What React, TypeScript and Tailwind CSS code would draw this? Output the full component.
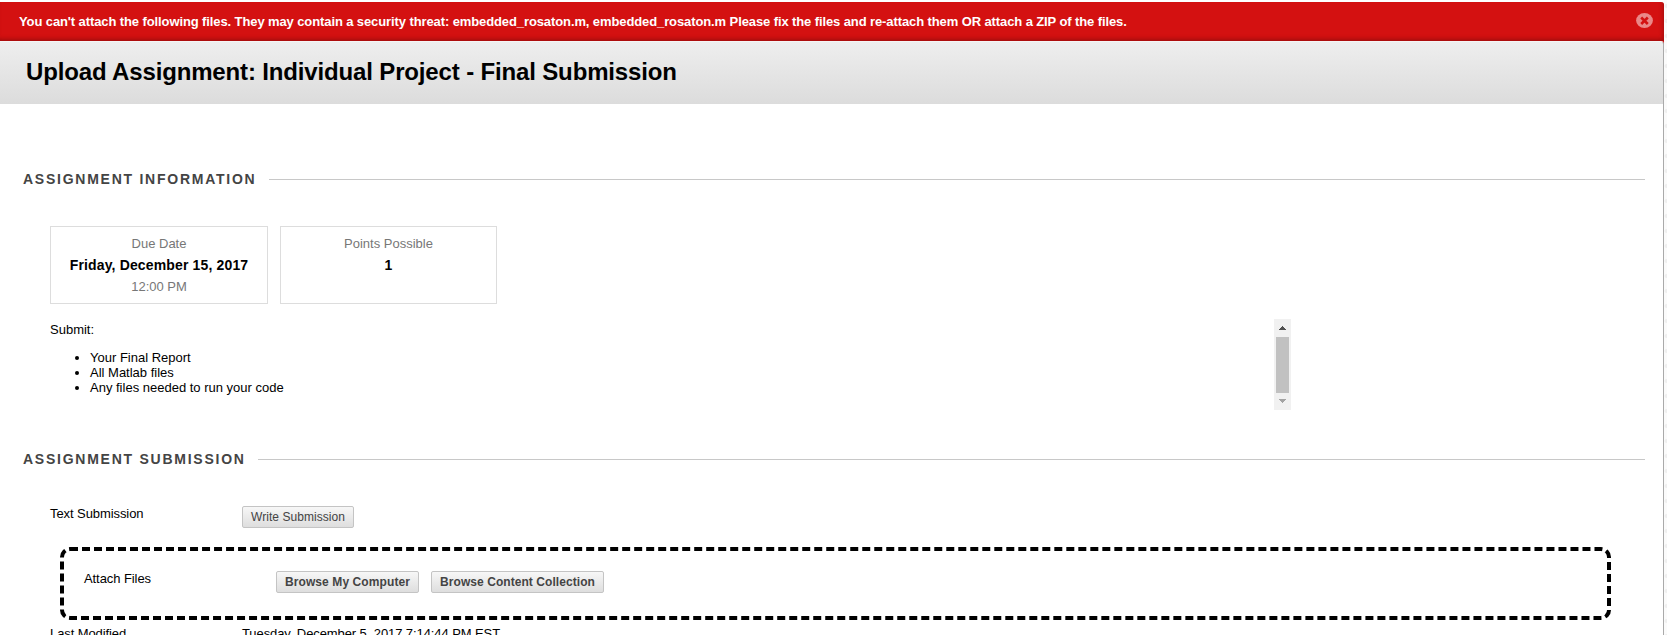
import type { ReactNode } from "react";

function SectionHeading({ children }: { children: ReactNode }) {
  return (
    <div className="flex h-4 items-start pr-[18px] pl-[23px]">
      <h2 className="text-[14px] leading-4 font-bold tracking-[1.75px] whitespace-nowrap text-[#444]">{children}</h2>
      <div className="mt-2 ml-[12.5px] h-px flex-1 bg-[#c8c8c8]" />
    </div>
  );
}

function Button({ children, className }: { children: ReactNode; className: string }) {
  return (
    <button
      className={`h-[22px] shrink-0 rounded-[2px] border border-[#c4c4c4] bg-linear-to-b from-[#f7f7f7] to-[#dedede] text-center text-[12px] leading-[20px] whitespace-nowrap text-[#444] ${className}`}
    >
      {children}
    </button>
  );
}

function InfoCard({ label, value, note, className }: { label: string; value: string; note?: string; className: string }) {
  return (
    <div className={`h-[78px] border border-[#ddd] pt-[6px] text-center ${className}`}>
      <div className="h-[22px] leading-[21px] text-[#777]">{label}</div>
      <div className="h-[21px] text-[14px] leading-[20px] font-bold tracking-[0.15px]">{value}</div>
      {note && <div className="leading-[21px] text-[#777]">{note}</div>}
    </div>
  );
}

export default function App() {
  return (
    <div className="flex h-[635px] w-[1667px] overflow-hidden bg-[#fbfbfb] font-['Liberation_Sans',Arial,sans-serif] text-[13px] text-black">
      <main className="w-[1664px] bg-white pt-[2px]">
        <div className="rounded-tr-[3px] bg-[#d41111]">
          <div className="flex h-[39px] items-start justify-between rounded-tr-[3px] pr-[11px] pl-[19px] shadow-[inset_-2px_-3px_4px_-1px_#a00d0d]">
            <p className="mt-[12px] text-[13px] leading-[15px] font-bold tracking-[-0.104px] whitespace-nowrap text-white">
              You can't attach the following files. They may contain a security threat: embedded_rosaton.m,
              embedded_rosaton.m Please fix the files and re-attach them OR attach a ZIP of the files.
            </p>
            <svg className="mt-[11px] h-[15px] w-[17px]" viewBox="0 0 17 15">
              <ellipse cx="8.5" cy="7.5" rx="8.4" ry="7.5" fill="#ea8888" />
              <path d="M5.2 4.5L11.8 11M11.8 4.5L5.2 11" stroke="#d41111" strokeWidth="2.6" />
            </svg>
          </div>
          <header className="h-[63px] rounded-tr-[3px] border-t border-r border-t-[#f5f5f5] border-r-[#aaa] bg-linear-to-b from-[#eeeeee] to-[#dcdcdc] pl-[26px]">
            <h1 className="pt-[16px] text-[24px] leading-[28px] font-bold tracking-[-0.15px] whitespace-nowrap">
              Upload Assignment: Individual Project - Final Submission
            </h1>
          </header>
        </div>

        <div className="h-[531px] border-r border-[#aaa] pt-[67px]">
          <SectionHeading>ASSIGNMENT INFORMATION</SectionHeading>

          <div className="mt-[39px] flex gap-3 pl-[50px]">
            <InfoCard className="w-[218px]" label="Due Date" value="Friday, December 15, 2017" note="12:00 PM" />
            <InfoCard className="w-[217px]" label="Points Possible" value="1" />
          </div>

          <div className="mt-[15px] flex h-[91px] w-[1291px] justify-between pl-[50px]">
            <div className="pt-[3px] leading-[15px]">
              <p>Submit:</p>
              <ul className="mt-[13px] list-disc pl-10">
                <li>Your Final Report</li>
                <li>All Matlab files</li>
                <li>Any files needed to run your code</li>
              </ul>
            </div>
            <div className="flex w-[17px] flex-col items-center bg-[#f1f1f1]">
              <svg className="h-[18px] w-[17px]" viewBox="0 0 17 18" shapeRendering="crispEdges">
                <path d="M8 7h1v1h1v1h1v1h1v1H5v-1h1V9h1V8h1z" fill="#505050" />
              </svg>
              <div className="h-[56px] w-[13px] bg-[#c1c1c1]" />
              <svg className="h-[17px] w-[17px]" viewBox="0 0 17 17" shapeRendering="crispEdges">
                <path d="M5 6h7v1h-1v1h-1v1H9v1H8V9H7V8H6V7H5z" fill="#a3a3a3" />
              </svg>
            </div>
          </div>

          <div className="mt-[41px]">
            <SectionHeading>ASSIGNMENT SUBMISSION</SectionHeading>
          </div>

          <div className="mt-[39px] flex h-[41px] pl-[50px]">
            <span className="w-[192px] leading-[15px] tracking-[-0.08px]">Text Submission</span>
            <Button className="w-[112px] tracking-[0.04px]">Write Submission</Button>
          </div>

          <div className="ml-[60px] flex h-[73px] w-[1551px] rounded-[10px] border-4 border-dashed border-black pt-[20px] pl-[20px]">
            <span className="w-[192px] leading-[15px] tracking-[-0.08px]">Attach Files</span>
            <Button className="w-[143px] font-bold tracking-[0.1px]">Browse My Computer</Button>
            <Button className="ml-3 w-[173px] font-bold tracking-[0.06px]">Browse Content Collection</Button>
          </div>

          <div className="mt-[6px] flex h-[15px] pl-[50px] leading-[15px] tracking-[-0.09px]">
            <span className="w-[192px]">Last Modified</span>
            <span>Tuesday, December 5, 2017 7:14:44 PM EST</span>
          </div>
        </div>
      </main>
      <svg className="h-[635px] w-[3px]" viewBox="0 0 3 635">
        <defs>
          <pattern id="dots" width="3" height="15" patternUnits="userSpaceOnUse">
            <ellipse cx="2.5" cy="6" rx="2" ry="2" fill="#efefef" />
          </pattern>
        </defs>
        <rect width="3" height="635" fill="url(#dots)" />
      </svg>
    </div>
  );
}
